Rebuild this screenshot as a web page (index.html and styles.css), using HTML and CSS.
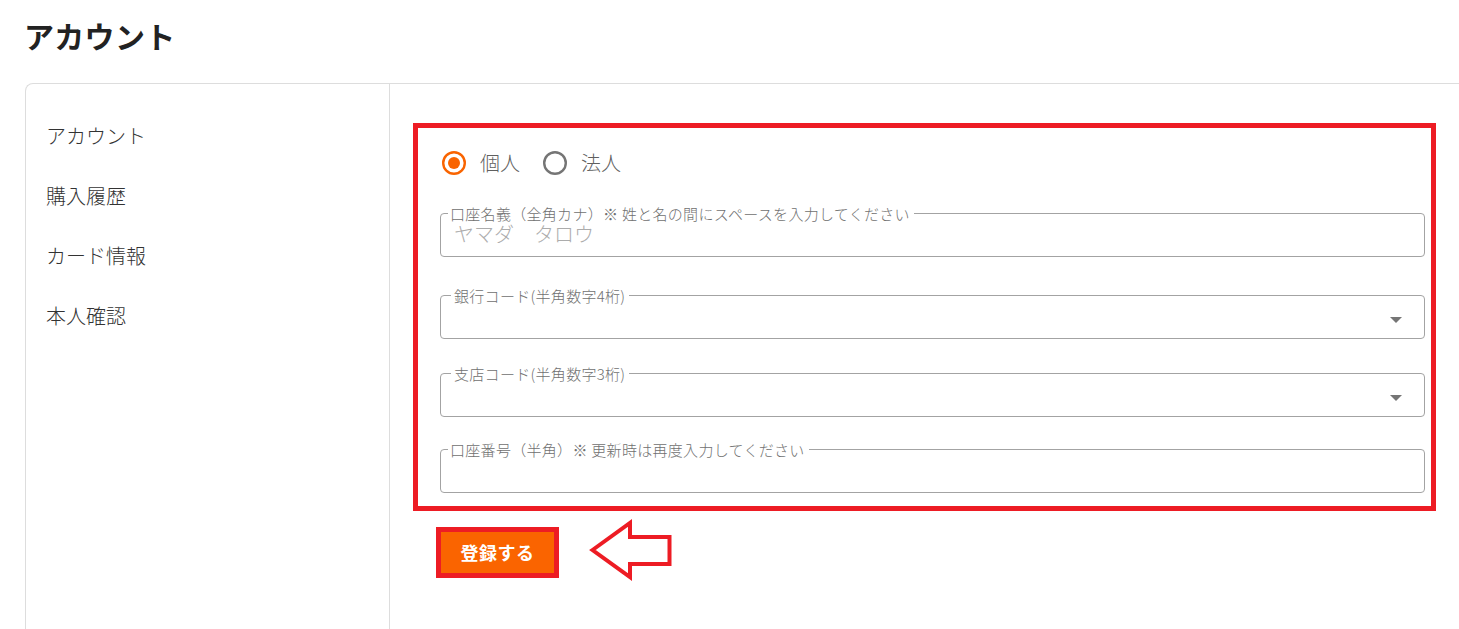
FILE: index.html
```html
<!DOCTYPE html>
<html lang="ja">
<head>
<meta charset="utf-8">
<title>アカウント</title>
<link rel="stylesheet" href="styles.css">
</head>
<body>
<h1 class="page-title">アカウント</h1>
<div class="card">
  <nav class="side">
    <a class="side-item">アカウント</a>
    <a class="side-item">購入履歴</a>
    <a class="side-item">カード情報</a>
    <a class="side-item">本人確認</a>
  </nav>
  <main class="content">
    <div class="annot-box">
      <div class="radios">
        <label class="radio">
          <svg class="radio-icon" width="24" height="24" viewBox="0 0 24 24"><circle cx="12" cy="12" r="10.8" fill="none" stroke="#f96400" stroke-width="2.4"/><circle cx="12" cy="12" r="6" fill="#f96400"/></svg>
          <span>個人</span>
        </label>
        <label class="radio">
          <svg class="radio-icon" width="24" height="24" viewBox="0 0 24 24"><circle cx="12" cy="12" r="10.8" fill="none" stroke="#757575" stroke-width="2.4"/></svg>
          <span>法人</span>
        </label>
      </div>
      <fieldset class="field f1">
        <legend>口座名義（全角カナ）※ 姓と名の間にスペースを入力してください</legend>
        <div class="field-body text-body"><input class="field-input" placeholder="ヤマダ　タロウ"></div>
      </fieldset>
      <fieldset class="field select f2">
        <legend>銀行コード(半角数字4桁)</legend>
        <div class="field-body select-body"><span class="caret"></span></div>
      </fieldset>
      <fieldset class="field select f3">
        <legend>支店コード(半角数字3桁)</legend>
        <div class="field-body select-body"><span class="caret"></span></div>
      </fieldset>
      <fieldset class="field f4">
        <legend>口座番号（半角）※ 更新時は再度入力してください</legend>
        <div class="field-body text-body"><input class="field-input"></div>
      </fieldset>
    </div>
    <div class="actions">
      <div class="annot-btn"><button class="submit" type="button">登録する</button></div>
      <svg class="arrow" width="90" height="66" viewBox="0 0 90 66">
        <polygon points="7.5,33 45,6 45,20 84.5,20 84.5,47 45,47 45,60" fill="none" stroke="#ed1c24" stroke-width="4" stroke-linejoin="miter" stroke-miterlimit="10"/>
      </svg>
    </div>
  </main>
</div>
</body>
</html>
```

FILE: styles.css
```css
html, body {
  margin: 0;
  padding: 0;
  background: #ffffff;
}

body {
  font-family: "Noto Sans CJK JP", "Noto Sans", "Liberation Sans", sans-serif;
  color: #222222;
  overflow: hidden;
}

.page-title {
  margin: 15px 0 0 24px;
  font-size: 30px;
  line-height: 40px;
  font-weight: 700;
  letter-spacing: 0.3px;
  color: #222222;
}

.card {
  margin: 28px 0 0 25px;
  border: 1px solid #dddddd;
  border-right: none;
  border-radius: 8px 0 0 0;
  display: flex;
  min-height: 620px;
}

.side {
  width: 364px;
  flex: none;
  box-sizing: border-box;
  border-right: 1px solid #dddddd;
  padding: 22px 0 0 20px;
}

.side-item {
  display: block;
  font-size: 20px;
  font-weight: 300;
  line-height: 60px;
  color: #333333;
  text-decoration: none;
}

.content {
  flex: 1;
  padding: 39px 0 0 23px;
}

.annot-box {
  width: 1023px;
  box-sizing: border-box;
  border: 5px solid #ed1c24;
  padding: 23px 6px 13px 22px;
}

.radios {
  display: flex;
  align-items: center;
  height: 24px;
  margin-bottom: 31px;
}

.radio {
  display: flex;
  align-items: center;
  gap: 14px;
  font-size: 20px;
  font-weight: 300;
  line-height: 24px;
  color: #5f5f5f;
}

.radio:first-child {
  margin-left: 2px;
}

.radio + .radio {
  margin-left: 23px;
}

.radio-icon {
  display: block;
  flex: none;
}

.field {
  display: block;
  margin: 0;
  min-width: 0;
  height: 51px;
  box-sizing: border-box;
  padding: 0 14px 0 7px;
  border: 1px solid #a3a3a3;
  border-radius: 4px;
}

.field legend {
  padding: 0 4px 0 2px;
  font-size: 15px;
  font-weight: 300;
  line-height: 15px;
  letter-spacing: 0.3px;
  color: #707070;
  white-space: nowrap;
}

.field.select {
  padding-left: 10px;
}

.field.select legend {
  padding-left: 3px;
}

.f2 { margin-top: 31px; }
.f3 { margin-top: 27px; }
.f4 { margin-top: 25px; }

.field-body {
  height: 35px;
  box-sizing: border-box;
  display: flex;
}

.text-body {
  margin-left: 6px;
  padding-top: 2px;
  align-items: flex-start;
}

.select-body {
  margin-right: 8px;
  align-items: center;
  justify-content: flex-end;
}

.field-input {
  display: block;
  width: 100%;
  height: 20px;
  margin: 0;
  padding: 0;
  border: none;
  outline: none;
  background: transparent;
  font-family: "Noto Sans CJK JP", "Noto Sans", sans-serif;
  font-size: 20px;
  font-weight: 300;
  line-height: 20px;
  color: #333333;
}

.field-input::placeholder {
  color: #acacac;
  opacity: 1;
}

.caret {
  width: 0;
  height: 0;
  margin-top: -1px;
  border-left: 6px solid transparent;
  border-right: 6px solid transparent;
  border-top: 6px solid #757575;
}

.actions {
  display: flex;
  align-items: flex-start;
  margin-top: 16px;
}

.annot-btn {
  margin-left: 23px;
  border: 5px solid #ed1c24;
  display: flex;
}

.submit {
  width: 113px;
  height: 41px;
  margin: 0;
  padding: 0;
  border: none;
  background: #fa6400;
  color: #ffffff;
  font-family: "Noto Sans CJK JP", "Noto Sans", sans-serif;
  font-size: 18px;
  font-weight: 700;
  letter-spacing: 0.5px;
  line-height: 41px;
}

.arrow {
  display: block;
  margin: -10px 0 0 26px;
  overflow: visible;
}
```
